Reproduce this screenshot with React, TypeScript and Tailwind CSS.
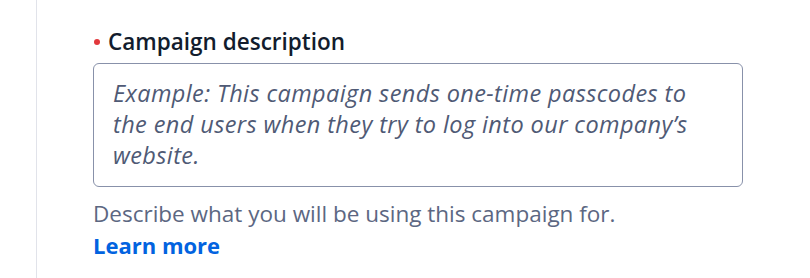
import React from "react";

export default function App() {
  return (
    <div
      className="flex h-[278px] w-[810px] bg-white"
      style={{ fontFamily: "'Open Sans', 'Noto Sans', sans-serif" }}
    >
      <div className="ml-[36px] w-px shrink-0 bg-[#e1e3ea]" />
      <div className="flex w-[650px] flex-col pl-[56px] pt-[26px]">
        <label
          htmlFor="desc"
          className="flex items-center text-[22.5px] font-semibold leading-[31px] text-[#121c2d]"
        >
          <span className="ml-[1px] mr-[8px] h-[6px] w-[6px] rounded-full bg-[#e2383c]" />
          Campaign description
        </label>
        <textarea
          id="desc"
          readOnly
          className="mt-[6px] h-[124px] w-[650px] resize-none rounded-[6px] border border-[#8891aa] bg-white pl-[19px] pr-[10px] pt-[14px] text-[23.5px] font-medium leading-[31px] tracking-[0.4px] text-[#121c2d] outline-none placeholder:italic placeholder:text-[#4f5a75]"
          placeholder={
            "Example: This campaign sends one-time passcodes to\nthe end users when they try to log into our company\u2019s\nwebsite."
          }
        />
        <p className="mt-[11px] text-[22.5px] leading-[31px] text-[#5c6782]">
          Describe what you will be using this campaign for.
        </p>
        <a href="#" className="mt-[1px] text-[22px] font-bold leading-[31px] text-[#0263e0]">
          Learn more
        </a>
      </div>
    </div>
  );
}
